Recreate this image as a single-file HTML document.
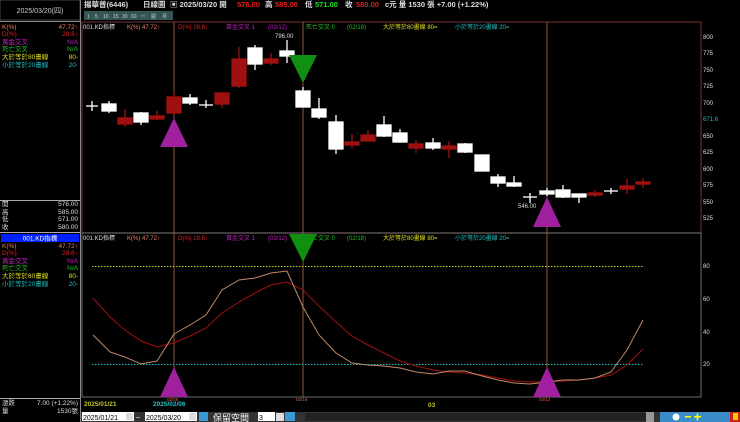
<!DOCTYPE html>
<html><head><meta charset="utf-8"><style>
body{margin:0;width:740px;height:422px;background:#000;overflow:hidden;font-family:"Liberation Sans","Noto Sans CJK TC",sans-serif}
svg{position:absolute;left:0;top:0}
text{font-family:"Liberation Sans","Noto Sans CJK TC",sans-serif}
</style></head><body>
<svg width="740" height="422" viewBox="0 0 740 422" xmlns="http://www.w3.org/2000/svg">
<!-- left panel -->
<rect x="0" y="0" width="80" height="20" fill="#000" stroke="#888" stroke-width="0.5"/>
<text x="40" y="13" fill="#ccc" font-size="7" text-anchor="middle">2025/03/20(四)</text>
<line x1="80.5" y1="0" x2="80.5" y2="422" stroke="#888"/>
<line x1="0" y1="21.5" x2="80" y2="21.5" stroke="#888"/>
<g font-size="6.5">
<text x="2" y="29" fill="#f08060">K(%)</text><text x="78" y="29" fill="#f08060" text-anchor="end">47.72↑</text>
<text x="2" y="36" fill="#e02020">D(%)</text><text x="78" y="36" fill="#e02020" text-anchor="end">28.6↑</text>
<text x="2" y="44" fill="#c020c0">黃金交叉</text><text x="78" y="44" fill="#c020c0" text-anchor="end">N/A</text>
<text x="2" y="51" fill="#20c020">死亡交叉</text><text x="78" y="51" fill="#20c020" text-anchor="end">N/A</text>
<text x="2" y="59" fill="#e0e020">大於等於80畫線</text><text x="78" y="59" fill="#e0e020" text-anchor="end">80-</text>
<text x="2" y="67" fill="#20c0c0">小於等於20畫線</text><text x="78" y="67" fill="#20c0c0" text-anchor="end">20-</text>
<line x1="0" y1="200.5" x2="80" y2="200.5" stroke="#aaa"/>
<text x="2" y="206" fill="#ddd">開</text><text x="78" y="206" fill="#ddd" text-anchor="end">576.00</text>
<text x="2" y="214" fill="#ddd">高</text><text x="78" y="214" fill="#ddd" text-anchor="end">585.00</text>
<text x="2" y="221" fill="#ddd">低</text><text x="78" y="221" fill="#ddd" text-anchor="end">571.00</text>
<text x="2" y="229" fill="#ddd">收</text><text x="78" y="229" fill="#ddd" text-anchor="end">580.00</text>
<line x1="0" y1="232.5" x2="80" y2="232.5" stroke="#aaa"/>
<rect x="1" y="234" width="78" height="8" fill="#0020ff"/>
<text x="40" y="240.5" fill="#fff" text-anchor="middle">001.KD指標</text>
<text x="2" y="248" fill="#f08060">K(%)</text><text x="78" y="248" fill="#f08060" text-anchor="end">47.72↑</text>
<text x="2" y="255" fill="#e02020">D(%)</text><text x="78" y="255" fill="#e02020" text-anchor="end">28.6↑</text>
<text x="2" y="263" fill="#c020c0">黃金交叉</text><text x="78" y="263" fill="#c020c0" text-anchor="end">N/A</text>
<text x="2" y="270" fill="#20c020">死亡交叉</text><text x="78" y="270" fill="#20c020" text-anchor="end">N/A</text>
<text x="2" y="278" fill="#e0e020">大於等於80畫線</text><text x="78" y="278" fill="#e0e020" text-anchor="end">80-</text>
<text x="2" y="286" fill="#20c0c0">小於等於20畫線</text><text x="78" y="286" fill="#20c0c0" text-anchor="end">20-</text>
<line x1="0" y1="398.5" x2="80" y2="398.5" stroke="#aaa"/>
<text x="2" y="405" fill="#ddd">漲跌</text><text x="78" y="405" fill="#ddd" text-anchor="end">7.00 (+1.22%)</text>
<text x="2" y="413" fill="#ddd">量</text><text x="78" y="413" fill="#ddd" text-anchor="end">1530張</text>
</g>
<!-- header -->
<g font-size="7.5" font-weight="bold">
<text x="84" y="7" fill="#ddd">揚華普(6446)</text>
<text x="143" y="7" fill="#ddd">日線圖</text>
<text x="170" y="7" fill="#ddd">▣ 2025/03/20 開</text>
<text x="237" y="7" fill="#e02020">576.00</text>
<text x="265" y="7" fill="#ddd">高</text><text x="275" y="7" fill="#e02020">585.00</text>
<text x="305" y="7" fill="#ddd">低</text><text x="315" y="7" fill="#20e020">571.00</text>
<text x="345" y="7" fill="#ddd">收</text><text x="356" y="7" fill="#e02020">580.00</text>
<text x="385" y="7" fill="#ddd">c元 量 1530 張 +7.00 (+1.22%)</text>
</g>
<g font-size="5" fill="#ccc">
<rect x="84" y="11" width="89" height="9" fill="#355"/>
<text x="87" y="18">1</text><text x="95" y="18">5</text><text x="103" y="18">10</text><text x="113" y="18">15</text><text x="122" y="18">30</text><text x="131" y="18">60</text><text x="141" y="18">⇨</text><text x="151" y="18">週</text><text x="162" y="18">月</text>
</g>
<!-- top panel -->
<rect x="82" y="22" width="619" height="211" fill="none" stroke="#904040" stroke-width="0.8"/>
<line x1="174" y1="22" x2="174" y2="397" stroke="#b07050" stroke-width="0.8"/>
<line x1="303" y1="22" x2="303" y2="397" stroke="#b07050" stroke-width="0.8"/>
<line x1="547" y1="22" x2="547" y2="397" stroke="#b07050" stroke-width="0.8"/>
<g font-size="6">
<text x="83" y="29" fill="#ddd">001.KD指標</text>
<text x="127" y="29" fill="#f08060">K(%) 47.72↑</text>
<text x="178" y="29" fill="#e02020">D(%) 28.6↑</text>
<text x="226" y="29" fill="#c020c0">黃金交叉 1</text><text x="268" y="29" fill="#c020c0">(03/12)</text>
<text x="306" y="29" fill="#20c020">死亡交叉 0</text><text x="347" y="29" fill="#20c020">(02/18)</text>
<text x="383" y="29" fill="#e0e020">大於等於80畫線 80=</text>
<text x="455" y="29" fill="#20c0c0">小於等於20畫線 20=</text>
</g>
<g font-size="6" fill="#ddd">
<text x="703" y="39">800</text><text x="703" y="55">775</text><text x="703" y="72">750</text><text x="703" y="88">725</text><text x="703" y="105">700</text><text x="703" y="121" fill="#20c0c0">671.6</text><text x="703" y="138">650</text><text x="703" y="154">625</text><text x="703" y="171">600</text><text x="703" y="187">575</text><text x="703" y="204">550</text><text x="703" y="220">525</text>
<text x="275" y="38">796.00</text>
<text x="518" y="208">546.00</text>
</g>
<g id="c" stroke-width="1.3">
<!-- x,bodyTop,bodyBot,wickTop,wickBot,color -->
<g stroke="#fff" fill="#fff">
<line x1="92" y1="101" x2="92" y2="111"/><line x1="86" y1="106" x2="98" y2="106"/>
<line x1="109" y1="101" x2="109" y2="113"/><rect x="102" y="104" width="14" height="7"/>
<line x1="141" y1="112" x2="141" y2="125"/><rect x="134" y="113" width="14" height="9"/>
<line x1="190" y1="94" x2="190" y2="105"/><rect x="183" y="98" width="14" height="5"/>
<line x1="206" y1="100" x2="206" y2="108"/><line x1="199" y1="105" x2="213" y2="105"/>
<line x1="255" y1="45" x2="255" y2="70"/><rect x="248" y="48" width="14" height="16"/>
<line x1="287" y1="40" x2="287" y2="63"/><rect x="280" y="51" width="14" height="5"/>
<line x1="303" y1="87" x2="303" y2="107"/><rect x="296" y="91" width="14" height="16"/>
<line x1="319" y1="98" x2="319" y2="119"/><rect x="312" y="109" width="14" height="8"/>
<line x1="336" y1="115" x2="336" y2="154"/><rect x="329" y="122" width="14" height="27"/>
<line x1="384" y1="116" x2="384" y2="137"/><rect x="377" y="125" width="14" height="11"/>
<line x1="400" y1="129" x2="400" y2="143"/><rect x="393" y="133" width="14" height="9"/>
<line x1="433" y1="138" x2="433" y2="150"/><rect x="426" y="143" width="14" height="5"/>
<line x1="465" y1="143" x2="465" y2="153"/><rect x="458" y="144" width="14" height="8"/>
<rect x="475" y="155" width="14" height="16"/>
<line x1="498" y1="174" x2="498" y2="187"/><rect x="491" y="177" width="14" height="6"/>
<line x1="514" y1="176" x2="514" y2="187"/><rect x="507" y="183" width="14" height="3"/>
<line x1="530" y1="193" x2="530" y2="203"/><line x1="523" y1="197" x2="537" y2="197"/>
<line x1="547" y1="188" x2="547" y2="196"/><rect x="540" y="191" width="14" height="3"/>
<line x1="563" y1="185" x2="563" y2="198"/><rect x="556" y="190" width="14" height="7"/>
<line x1="579" y1="194" x2="579" y2="203"/><rect x="572" y="194" width="14" height="3"/>
<line x1="611" y1="188" x2="611" y2="194"/><line x1="604" y1="191" x2="618" y2="191"/>
</g>
<g stroke="#a01010" fill="#a01010">
<line x1="125" y1="109" x2="125" y2="127"/><rect x="118" y="118" width="14" height="6"/>
<line x1="157" y1="111" x2="157" y2="120"/><rect x="150" y="116" width="14" height="3"/>
<line x1="174" y1="92" x2="174" y2="115"/><rect x="167" y="97" width="14" height="16"/>
<line x1="222" y1="93" x2="222" y2="108"/><rect x="215" y="93" width="14" height="11"/>
<line x1="239" y1="47" x2="239" y2="88"/><rect x="232" y="59" width="14" height="27"/>
<line x1="271" y1="53" x2="271" y2="65"/><rect x="264" y="59" width="14" height="4"/>
<line x1="352" y1="134" x2="352" y2="149"/><rect x="345" y="142" width="14" height="3"/>
<line x1="368" y1="130" x2="368" y2="141"/><rect x="361" y="135" width="14" height="6"/>
<line x1="416" y1="140" x2="416" y2="153"/><rect x="409" y="144" width="14" height="4"/>
<line x1="449" y1="141" x2="449" y2="158"/><rect x="442" y="146" width="14" height="3"/>
<line x1="595" y1="190" x2="595" y2="197"/><rect x="588" y="193" width="14" height="2"/>
<line x1="627" y1="179" x2="627" y2="194"/><rect x="620" y="186" width="14" height="3"/>
<line x1="643" y1="178" x2="643" y2="188"/><rect x="636" y="182" width="14" height="2"/>
</g>
</g>
<polygon points="174,118 160,147 188,147" fill="#a020a0"/>
<polygon points="289,55 317,55 303,83" fill="#109010"/>
<polygon points="547,197 533,227 561,227" fill="#a020a0"/>
<!-- lower panel -->
<rect x="82" y="233" width="619" height="164" fill="none" stroke="#888" stroke-width="0.8"/>
<g font-size="6">
<text x="83" y="240" fill="#ddd">001.KD指標</text>
<text x="127" y="240" fill="#f08060">K(%) 47.72↑</text>
<text x="178" y="240" fill="#e02020">D(%) 28.6↑</text>
<text x="226" y="240" fill="#c020c0">黃金交叉 1</text><text x="268" y="240" fill="#c020c0">(03/12)</text>
<text x="306" y="240" fill="#20c020">死亡交叉 0</text><text x="347" y="240" fill="#20c020">(02/18)</text>
<text x="383" y="240" fill="#e0e020">大於等於80畫線 80=</text>
<text x="455" y="240" fill="#20c0c0">小於等於20畫線 20=</text>
</g>
<line x1="92" y1="266.5" x2="643" y2="266.5" stroke="#d0d020" stroke-dasharray="1.5,1.5"/>
<line x1="92" y1="364.5" x2="643" y2="364.5" stroke="#20c0c0" stroke-dasharray="1.5,1.5"/>
<polyline fill="none" stroke="#a01010" stroke-width="1" points="93,298 110,317 125,330 141,341 157,347 174,343 190,336 206,328 222,313 239,302 255,293 271,285 287,282 303,290 319,306 336,322 352,336 368,345 384,353 400,361 416,366 433,370 449,372 465,373 482,375 498,378 514,381 530,382 547,382 563,381 579,380 595,378 611,375 627,365 643,349"/>
<polyline fill="none" stroke="#c08a6a" stroke-width="1" points="93,335 110,352 125,357 141,364 157,361 174,334 190,325 206,315 222,290 239,280 255,278 271,273 287,271 303,307 319,335 336,353 352,363 368,365 384,366 400,368 416,372 433,374 449,371 465,371 482,376 498,380 514,383 530,384 547,382 563,380 579,380 595,378 611,372 627,350 643,320"/>
<polygon points="174,367 160,397 188,397" fill="#a020a0"/>
<polygon points="289,234 317,234 303,262" fill="#109010"/>
<polygon points="547,367 533,397 561,397" fill="#a020a0"/>
<g font-size="6" fill="#ddd">
<text x="703" y="268">80</text><text x="703" y="301">60</text><text x="703" y="334">40</text><text x="703" y="366">20</text>
</g>
<!-- date row -->
<g font-size="6.5" font-weight="bold">
<text x="84" y="406" fill="#c0c020">2025/01/21</text>
<text x="153" y="406" fill="#20c0c0">2025/02/06</text>
<text x="428" y="407" fill="#c0c020">03</text>
</g>
<g font-size="4.5" fill="#e06040">
<text x="167" y="401">02/06</text><text x="296" y="401">02/18</text><text x="539" y="401">03/12</text>
</g>
<!-- bottom toolbar -->
<rect x="81" y="412" width="659" height="10" fill="#333"/>
<rect x="82" y="412" width="52" height="9" fill="#fff"/><text x="83" y="420" font-size="7" fill="#000">2025/01/21</text>
<rect x="126" y="413" width="7" height="7" fill="#ddd"/>
<text x="136" y="420" font-size="7" fill="#fff">~</text>
<rect x="145" y="412" width="52" height="9" fill="#fff"/><text x="146" y="420" font-size="7" fill="#000">2025/03/20</text>
<rect x="189" y="413" width="7" height="7" fill="#ddd"/>
<rect x="199" y="412" width="9" height="9" fill="#3a9ad8"/>
<text x="213" y="421" font-size="9" fill="#fff">保留空間</text>
<rect x="258" y="412" width="17" height="9" fill="#fff"/><text x="259" y="420" font-size="7" fill="#000">3</text>
<rect x="276" y="413" width="8" height="8" fill="#ddd"/>
<rect x="285" y="412" width="10" height="9" fill="#3a9ad8"/>
<rect x="305" y="413" width="345" height="8" fill="#222"/>
<rect x="646" y="412" width="8" height="10" fill="#999"/>
<rect x="660" y="412" width="72" height="10" fill="#3a8cc8"/>
<rect x="730" y="412" width="10" height="10" fill="#d02020"/>
<circle cx="676" cy="417" r="3.5" fill="#fff"/>
<rect x="685" y="416" width="6" height="1.5" fill="#ff0"/>
<rect x="694" y="416" width="7" height="1.5" fill="#ff0"/><rect x="696.7" y="413.5" width="1.5" height="7" fill="#ff0"/>
<rect x="733" y="413" width="5" height="7" fill="#fc0"/>
</svg>
</body></html>
